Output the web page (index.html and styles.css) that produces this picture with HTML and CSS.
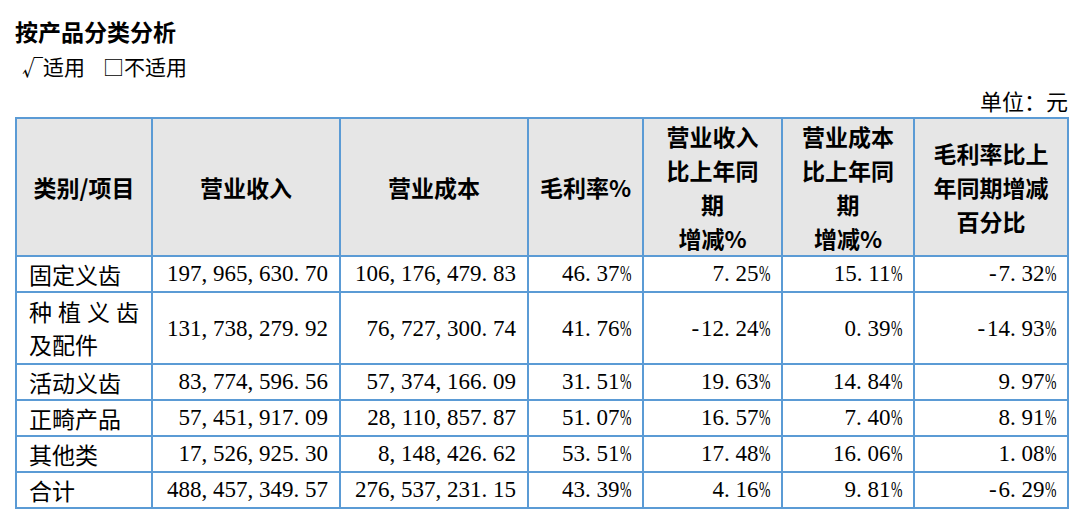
FILE: index.html
```html
<!DOCTYPE html>
<html lang="zh-CN">
<head>
<meta charset="utf-8">
<title>按产品分类分析</title>
<link rel="stylesheet" href="styles.css">
</head>
<body>
<div class="page">
  <h2 class="title">按产品分类分析</h2>
  <div class="opts"><span>√适用</span><span>□不适用</span></div>
  <div class="unit">单位：元</div>
  <table class="grid">
    <colgroup>
      <col class="c1"><col class="c2"><col class="c3"><col class="c4"><col class="c5"><col class="c6"><col class="c7">
    </colgroup>
    <thead>
      <tr>
        <th>类别/项目</th>
        <th>营业收入</th>
        <th>营业成本</th>
        <th>毛利率%</th>
        <th>营业收入<br>比上年同<br>期<br>增减%</th>
        <th>营业成本<br>比上年同<br>期<br>增减%</th>
        <th>毛利率比上<br>年同期增减<br>百分比</th>
      </tr>
    </thead>
    <tbody>
      <tr>
        <td class="name">固定义齿</td>
        <td class="num">197<span class="p">,</span>965<span class="p">,</span>630<span class="p">.</span>70</td>
        <td class="num">106<span class="p">,</span>176<span class="p">,</span>479<span class="p">.</span>83</td>
        <td class="num">46<span class="p">.</span>37<span class="pc">%</span></td>
        <td class="num">7<span class="p">.</span>25<span class="pc">%</span></td>
        <td class="num">15<span class="p">.</span>11<span class="pc">%</span></td>
        <td class="num"><span class="m">-</span>7<span class="p">.</span>32<span class="pc">%</span></td>
      </tr>
      <tr class="tall">
        <td class="name">种植义齿及配件</td>
        <td class="num">131<span class="p">,</span>738<span class="p">,</span>279<span class="p">.</span>92</td>
        <td class="num">76<span class="p">,</span>727<span class="p">,</span>300<span class="p">.</span>74</td>
        <td class="num">41<span class="p">.</span>76<span class="pc">%</span></td>
        <td class="num"><span class="m">-</span>12<span class="p">.</span>24<span class="pc">%</span></td>
        <td class="num">0<span class="p">.</span>39<span class="pc">%</span></td>
        <td class="num"><span class="m">-</span>14<span class="p">.</span>93<span class="pc">%</span></td>
      </tr>
      <tr>
        <td class="name">活动义齿</td>
        <td class="num">83<span class="p">,</span>774<span class="p">,</span>596<span class="p">.</span>56</td>
        <td class="num">57<span class="p">,</span>374<span class="p">,</span>166<span class="p">.</span>09</td>
        <td class="num">31<span class="p">.</span>51<span class="pc">%</span></td>
        <td class="num">19<span class="p">.</span>63<span class="pc">%</span></td>
        <td class="num">14<span class="p">.</span>84<span class="pc">%</span></td>
        <td class="num">9<span class="p">.</span>97<span class="pc">%</span></td>
      </tr>
      <tr>
        <td class="name">正畸产品</td>
        <td class="num">57<span class="p">,</span>451<span class="p">,</span>917<span class="p">.</span>09</td>
        <td class="num">28<span class="p">,</span>110<span class="p">,</span>857<span class="p">.</span>87</td>
        <td class="num">51<span class="p">.</span>07<span class="pc">%</span></td>
        <td class="num">16<span class="p">.</span>57<span class="pc">%</span></td>
        <td class="num">7<span class="p">.</span>40<span class="pc">%</span></td>
        <td class="num">8<span class="p">.</span>91<span class="pc">%</span></td>
      </tr>
      <tr>
        <td class="name">其他类</td>
        <td class="num">17<span class="p">,</span>526<span class="p">,</span>925<span class="p">.</span>30</td>
        <td class="num">8<span class="p">,</span>148<span class="p">,</span>426<span class="p">.</span>62</td>
        <td class="num">53<span class="p">.</span>51<span class="pc">%</span></td>
        <td class="num">17<span class="p">.</span>48<span class="pc">%</span></td>
        <td class="num">16<span class="p">.</span>06<span class="pc">%</span></td>
        <td class="num">1<span class="p">.</span>08<span class="pc">%</span></td>
      </tr>
      <tr>
        <td class="name">合计</td>
        <td class="num">488<span class="p">,</span>457<span class="p">,</span>349<span class="p">.</span>57</td>
        <td class="num">276<span class="p">,</span>537<span class="p">,</span>231<span class="p">.</span>15</td>
        <td class="num">43<span class="p">.</span>39<span class="pc">%</span></td>
        <td class="num">4<span class="p">.</span>16<span class="pc">%</span></td>
        <td class="num">9<span class="p">.</span>81<span class="pc">%</span></td>
        <td class="num"><span class="m">-</span>6<span class="p">.</span>29<span class="pc">%</span></td>
      </tr>
    </tbody>
  </table>
</div>
</body>
</html>
```

FILE: styles.css
```css
* { box-sizing: border-box; }

body {
  margin: 0;
  background: #ffffff;
  color: #000000;
  font-family: "Noto Sans CJK SC", sans-serif;
}

.page {
  width: 1082px;
  padding: 16px 14px 0 15px;
}

.title {
  margin: 0;
  font-size: 23px;
  font-weight: bold;
  line-height: 30px;
}

.opts {
  display: flex;
  gap: 18px;
  margin-top: 5px;
  padding-left: 7px;
  font-size: 21px;
  line-height: 30px;
}

.unit {
  margin-top: 4px;
  font-size: 22px;
  line-height: 30px;
  text-align: right;
}

.grid {
  margin-top: 2px;
  width: 1053px;
  border-collapse: collapse;
  table-layout: fixed;
}

.c1 { width: 136px; }
.c2 { width: 188px; }
.c3 { width: 188px; }
.c4 { width: 115px; }
.c5 { width: 139px; }
.c6 { width: 132px; }
.c7 { width: 154px; }

.grid th,
.grid td {
  border: 2px solid #5b9bd5;
  font-size: 23px;
}

.grid th {
  background: #e6e6e6;
  font-weight: bold;
  line-height: 34px;
  height: 136px;
  padding: 0 4px;
  text-align: center;
  vertical-align: middle;
}

.grid td {
  line-height: 34px;
  padding: 0;
  vertical-align: middle;
}

.grid .tall td {
  line-height: 33px;
  padding-top: 2px;
  padding-bottom: 2px;
}

.grid .name {
  padding-left: 12px;
  padding-right: 12px;
  text-align: justify;
}

.grid .num {
  padding-right: 11px;
  text-align: right;
  font-family: "Liberation Serif", "Noto Sans CJK SC", serif;
  white-space: nowrap;
}

.p { letter-spacing: 0.25em; }

.m { letter-spacing: 0.08em; }

.pc {
  display: inline-block;
  width: 0.5em;
  transform: scaleX(0.6);
  transform-origin: left center;
}
```
